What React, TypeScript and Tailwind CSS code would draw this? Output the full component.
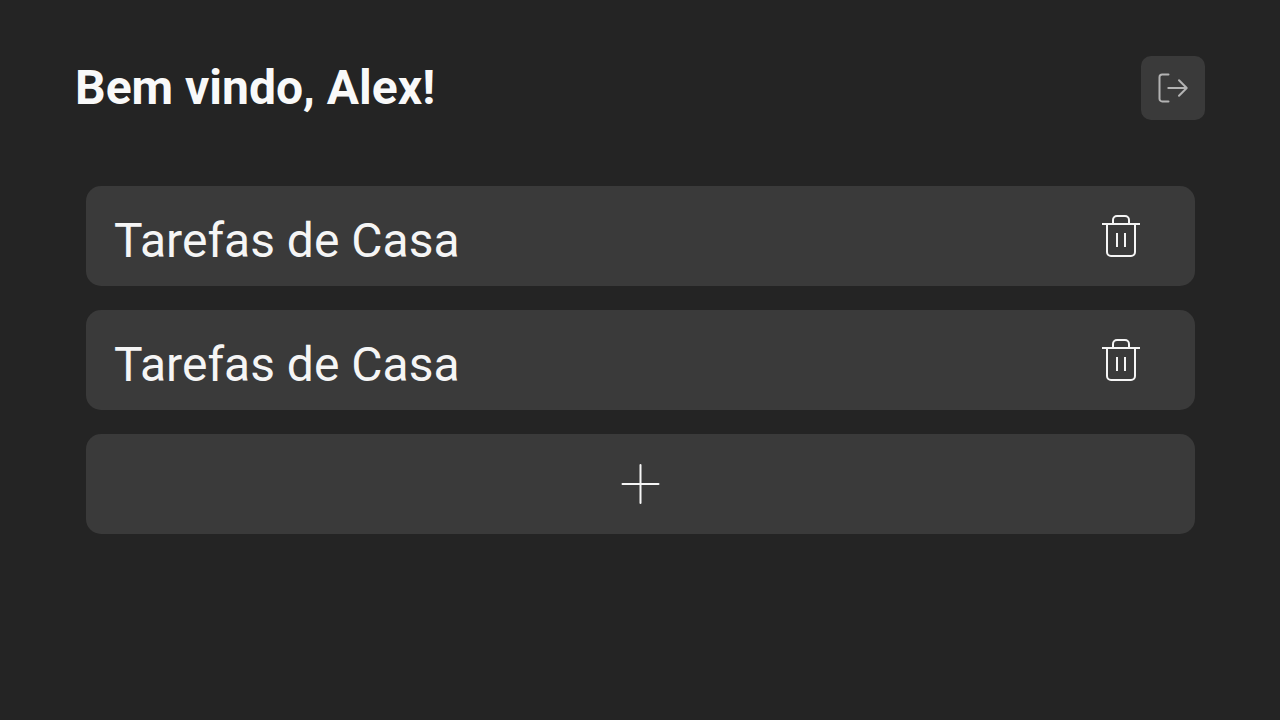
interface TaskList {
  id: number;
  title: string;
}

const lists: TaskList[] = [
  { id: 1, title: "Tarefas de Casa" },
  { id: 2, title: "Tarefas de Casa" },
];

function LogoutIcon() {
  return (
    <svg viewBox="0 0 32 32" className="size-8" fill="none" stroke="currentColor" strokeWidth="2" strokeLinecap="round" strokeLinejoin="round" aria-hidden="true">
      <path d="M11.5 2.6H5.2A2.7 2.7 0 0 0 2.5 5.3V26.7A2.7 2.7 0 0 0 5.2 29.4H11.5" />
      <path d="M11.3 16H29.6M22 8.2L29.7 16L22 23.8" />
    </svg>
  );
}

function TrashIcon() {
  return (
    <svg viewBox="0 0 48 48" className="size-12" fill="none" stroke="currentColor" strokeWidth="2" strokeLinejoin="round" aria-hidden="true">
      <path d="M5 12H43" />
      <path d="M10 12V40A4 4 0 0 0 14 44H34A4 4 0 0 0 38 40V12" />
      <path d="M16 12V8A4 4 0 0 1 20 4H28A4 4 0 0 1 32 8V12" />
      <path d="M20 21V35M28 21V35" />
    </svg>
  );
}

function PlusIcon() {
  return (
    <svg viewBox="0 0 48 48" className="size-12" fill="none" stroke="currentColor" strokeWidth="2" strokeLinecap="round" aria-hidden="true">
      <path d="M23.5 5V43M5.5 24H41.5" />
    </svg>
  );
}

export default function App() {
  return (
    <div className="min-h-screen bg-[#242424] px-[75px] pt-14 font-['Roboto',sans-serif] text-[#f5f5f5]">
      <header className="flex items-center justify-between">
        <h1 className="text-5xl font-bold text-[#f9f9f9]">Bem vindo, Alex!</h1>
        <button type="button" aria-label="Sair" className="flex size-16 items-center justify-center rounded-[10px] bg-[#3a3a3a] text-[#b3b3b3]">
          <LogoutIcon />
        </button>
      </header>
      <main className="mt-[66px] pr-[10px] pl-[11px]">
        <ul className="flex flex-col gap-6">
          {lists.map((list) => (
            <li key={list.id} className="flex h-[100px] items-center justify-between rounded-[15px] bg-[#3a3a3a] pr-[50px] pl-7">
              <span className="pt-2.5 text-5xl">{list.title}</span>
              <button type="button" aria-label={`Excluir ${list.title}`}>
                <TrashIcon />
              </button>
            </li>
          ))}
          <li>
            <button type="button" aria-label="Adicionar lista" className="flex h-[100px] w-full items-center justify-center rounded-[15px] bg-[#3a3a3a]">
              <PlusIcon />
            </button>
          </li>
        </ul>
      </main>
    </div>
  );
}
